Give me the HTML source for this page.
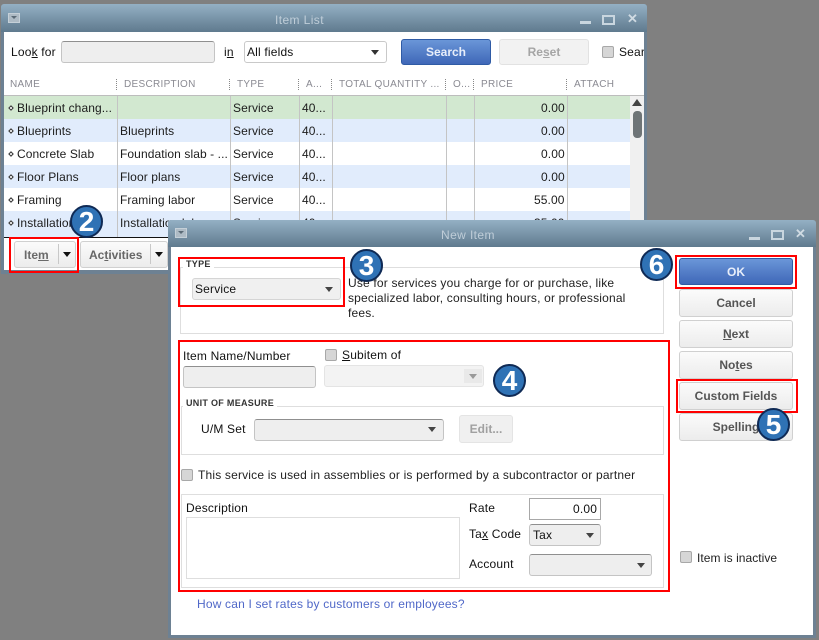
<!DOCTYPE html>
<html><head><meta charset="utf-8">
<style>
html,body{margin:0;padding:0}
body{width:819px;height:640px;overflow:hidden;background:#808080;position:relative;font:12px "Liberation Sans",sans-serif;color:#111;letter-spacing:.18px}
div,span.a{position:absolute;box-sizing:border-box}
.t{white-space:nowrap;line-height:14px}
.win{background:#6d8193;border-radius:3px 3px 0 0}
.bar{left:0;right:0;top:0;background:linear-gradient(#94b0c4,#5f7a8e);border-radius:3px 3px 0 0}
.ttl{color:#bfcdd8;font-size:12px;letter-spacing:.4px}
.sys{width:12px;height:10px;background:#aebbc5;border:1px solid #c5d0d8}
.sys:after{content:"";position:absolute;left:2px;top:2px;width:0;height:0;border-left:3px solid transparent;border-right:3px solid transparent;border-top:3px solid #5a6a76}
.min{width:11px;height:3px;background:#c9d6df}
.max{width:13px;height:10px;border:2px solid #c9d6df;border-top-width:2px}
.x{color:#d0dbe3;font:bold 13px "Liberation Sans",sans-serif;line-height:14px;letter-spacing:0}
.h{font-size:10px;color:#8a8a92;letter-spacing:.3px;line-height:12px;white-space:nowrap}
.sep{width:1px;height:11px;border-left:1px dotted #888}
.row{left:4px;width:626px;height:23px}
.vl{width:1px;background:#c4c4c4}
.cell{line-height:14px;white-space:nowrap;color:#1c1c1c;letter-spacing:.09px}
.d{width:4px;height:4px;background:#fff;border:1px solid #333;transform:rotate(45deg)}
.btn{background:linear-gradient(#fbfbfb,#ececec);border:1px solid #d0d0d0;border-radius:3px;text-align:center;font-weight:bold;color:#555;font-size:12px;letter-spacing:0}
.blue{background:linear-gradient(#6a96d8,#3f67b8);border:1px solid #2f5ba5;border-radius:3px;color:#e8eefa;text-align:center;font-weight:bold;font-size:12px;letter-spacing:0}
.cb{width:12px;height:12px;background:#d6d6d6;border:1px solid #a8a8a8;border-radius:2px}
.dd{background:#eeeeee;border:1px solid #c4c4c4;border-top-color:#8f8f8f;border-radius:3px}
.ar{width:0;height:0;border-left:4px solid transparent;border-right:4px solid transparent;border-top:5px solid #444}
.red{border:2px solid #f00}
.b{width:33px;height:33px;border-radius:50%;background:#2f72b5;border:2px solid #0f2a55;color:#fff;font:bold 28px/29px "Liberation Sans",sans-serif;text-align:center;letter-spacing:0}
.box{border:1px solid #dedede}
.lbl{background:#fff;padding:0 3px;font-size:9px;font-weight:bold;color:#333;letter-spacing:.3px;line-height:11px;white-space:nowrap}
u{text-decoration:underline}
</style></head><body>

<!-- Item List -->
<div class="win" style="left:1px;top:4px;width:646px;height:270px">
  <div class="bar" style="height:28px"></div>
  <div class="sys" style="left:7px;top:9px"></div>
  <div class="t ttl" style="left:274px;top:9px">Item List</div>
  <div class="min" style="left:579px;top:17px"></div>
  <div class="max" style="left:601px;top:11px"></div>
  <div class="x" style="left:626px;top:8px">✕</div>
  <div style="left:3px;top:28px;width:640px;height:238px;background:#fff"></div>
</div>
<div class="t" style="left:11px;top:45px">Loo<u>k</u> for</div>
<div class="dd" style="left:61px;top:41px;width:154px;height:22px"></div>
<div class="t" style="left:224px;top:45px">i<u>n</u></div>
<div style="left:244px;top:41px;width:143px;height:22px;background:#fff;border:1px solid #c9c9c9;border-radius:3px"></div>
<div class="t" style="left:247px;top:45px">All fields</div>
<div class="ar" style="left:371px;top:50px;border-top-color:#333"></div>
<div class="blue t" style="left:401px;top:39px;width:90px;height:26px;line-height:24px">Search</div>
<div class="btn t" style="left:499px;top:39px;width:90px;height:26px;line-height:24px;color:#a5a5a5;background:#f2f2f2;border-color:#e2e2e2">Re<u>s</u>et</div>
<div class="cb" style="left:602px;top:46px"></div>
<div style="left:619px;top:44px;width:25px;height:16px;overflow:hidden"><div class="t" style="left:0;top:1px">Search</div></div>

<div class="h" style="left:10px;top:79px">NAME</div>
<div class="h" style="left:124px;top:79px">DESCRIPTION</div>
<div class="h" style="left:237px;top:79px">TYPE</div>
<div class="h" style="left:306px;top:79px">A...</div>
<div class="h" style="left:339px;top:79px">TOTAL QUANTITY ...</div>
<div class="h" style="left:453px;top:79px">O...</div>
<div class="h" style="left:481px;top:79px">PRICE</div>
<div class="h" style="left:574px;top:79px">ATTACH</div>
<div class="sep" style="left:116px;top:79px"></div>
<div class="sep" style="left:229px;top:79px"></div>
<div class="sep" style="left:298px;top:79px"></div>
<div class="sep" style="left:331px;top:79px"></div>
<div class="sep" style="left:445px;top:79px"></div>
<div class="sep" style="left:473px;top:79px"></div>
<div class="sep" style="left:566px;top:79px"></div>
<div style="left:4px;top:95px;width:640px;height:1px;background:#bdbdbd"></div>

<div class="row" style="top:96px;background:#d2e8d0"></div>
<div class="row" style="top:119px;background:#e1ecfc"></div>
<div class="row" style="top:142px;background:#fff"></div>
<div class="row" style="top:165px;background:#e1ecfc"></div>
<div class="row" style="top:188px;background:#fff"></div>
<div class="row" style="top:211px;height:26px;background:#e1ecfc"></div>

<div class="vl" style="left:117px;top:96px;height:141px"></div>
<div class="vl" style="left:230px;top:96px;height:141px"></div>
<div class="vl" style="left:299px;top:96px;height:141px"></div>
<div class="vl" style="left:332px;top:96px;height:141px"></div>
<div class="vl" style="left:446px;top:96px;height:141px"></div>
<div class="vl" style="left:474px;top:96px;height:141px"></div>
<div class="vl" style="left:567px;top:96px;height:141px"></div>

<div class="d" style="left:9px;top:106px"></div><div class="cell" style="left:17px;top:101px">Blueprint chang...</div>
<div class="cell" style="left:233px;top:101px">Service</div><div class="cell" style="left:302px;top:101px">40...</div><div class="cell" style="left:541px;top:101px">0.00</div>
<div class="d" style="left:9px;top:129px"></div><div class="cell" style="left:17px;top:124px">Blueprints</div>
<div class="cell" style="left:120px;top:124px">Blueprints</div><div class="cell" style="left:233px;top:124px">Service</div><div class="cell" style="left:302px;top:124px">40...</div><div class="cell" style="left:541px;top:124px">0.00</div>
<div class="d" style="left:9px;top:152px"></div><div class="cell" style="left:17px;top:147px">Concrete Slab</div>
<div class="cell" style="left:120px;top:147px">Foundation slab - ...</div><div class="cell" style="left:233px;top:147px">Service</div><div class="cell" style="left:302px;top:147px">40...</div><div class="cell" style="left:541px;top:147px">0.00</div>
<div class="d" style="left:9px;top:175px"></div><div class="cell" style="left:17px;top:170px">Floor Plans</div>
<div class="cell" style="left:120px;top:170px">Floor plans</div><div class="cell" style="left:233px;top:170px">Service</div><div class="cell" style="left:302px;top:170px">40...</div><div class="cell" style="left:541px;top:170px">0.00</div>
<div class="d" style="left:9px;top:198px"></div><div class="cell" style="left:17px;top:193px">Framing</div>
<div class="cell" style="left:120px;top:193px">Framing labor</div><div class="cell" style="left:233px;top:193px">Service</div><div class="cell" style="left:302px;top:193px">40...</div><div class="cell" style="left:534px;top:193px">55.00</div>
<div class="d" style="left:9px;top:221px"></div><div class="cell" style="left:17px;top:216px">Installation</div>
<div class="cell" style="left:120px;top:216px">Installation labor</div><div class="cell" style="left:233px;top:216px">Service</div><div class="cell" style="left:302px;top:216px">40...</div><div class="cell" style="left:534px;top:216px">35.00</div>

<!-- scrollbar -->
<div style="left:630px;top:96px;width:14px;height:141px;background:#f0f0f0"></div>
<div class="ar" style="left:632px;top:99px;border:0;border-left:5px solid transparent;border-right:5px solid transparent;border-bottom:7px solid #444"></div>
<div style="left:633px;top:111px;width:9px;height:27px;background:#6e7476;border-radius:4px"></div>
<div style="left:4px;top:237px;width:640px;height:1px;background:#111"></div>

<div class="btn t" style="left:14px;top:241px;width:62px;height:27px;line-height:26px;text-align:left;padding-left:9px;color:#6a6a6a">Ite<u>m</u></div>
<div style="left:58px;top:244px;width:1px;height:20px;background:#c8c8c8"></div>
<div class="ar" style="left:63px;top:252px;border-top-color:#111"></div>
<div class="btn t" style="left:80px;top:241px;width:88px;height:27px;line-height:26px;text-align:left;padding-left:8px;color:#666">Ac<u>t</u>ivities</div>
<div style="left:150px;top:244px;width:1px;height:20px;background:#c8c8c8"></div>
<div class="ar" style="left:155px;top:252px;border-top-color:#111"></div>

<!-- New Item -->
<div class="win" style="left:168px;top:220px;width:648px;height:418px">
  <div class="bar" style="height:27px"></div>
  <div class="sys" style="left:7px;top:8px"></div>
  <div class="t ttl" style="left:273px;top:8px">New Item</div>
  <div class="min" style="left:581px;top:17px"></div>
  <div class="max" style="left:603px;top:10px"></div>
  <div class="x" style="left:627px;top:7px">✕</div>
  <div style="left:3px;top:27px;width:642px;height:388px;background:#fff"></div>
</div>

<div class="box" style="left:180px;top:267px;width:484px;height:67px"></div>
<div class="lbl" style="left:183px;top:259px">TYPE</div>
<div class="dd" style="left:192px;top:278px;width:149px;height:22px;border-color:#d5d5d5;background:#f0f0f0"></div>
<div class="t" style="left:195px;top:282px">Service</div>
<div class="ar" style="left:325px;top:287px"></div>
<div class="t" style="left:348px;top:276px;line-height:15px;color:#222">Use for services you charge for or purchase, like<br>specialized labor, consulting hours, or professional<br>fees.</div>

<div class="t" style="left:183px;top:349px">Item Name/Number</div>
<div class="dd" style="left:183px;top:366px;width:133px;height:22px"></div>
<div class="cb" style="left:325px;top:349px"></div>
<div class="t" style="left:342px;top:348px"><u>S</u>ubitem of</div>
<div class="dd" style="left:324px;top:365px;width:160px;height:22px;background:#f3f3f3;border-color:#e4e4e4"></div>
<div style="left:464px;top:369px;width:18px;height:14px;background:#e9e9e9"></div>
<div class="ar" style="left:469px;top:374px;border-top-color:#999"></div>

<div class="box" style="left:181px;top:406px;width:483px;height:49px"></div>
<div class="lbl" style="left:183px;top:398px">UNIT OF MEASURE</div>
<div class="t" style="left:201px;top:422px">U/M Set</div>
<div class="dd" style="left:254px;top:419px;width:190px;height:22px"></div>
<div class="ar" style="left:428px;top:427px"></div>
<div class="btn t" style="left:459px;top:415px;width:54px;height:28px;line-height:27px;color:#a0a0a0;background:#f0f0f0;border-color:#e4e4e4">Edit...</div>

<div class="cb" style="left:181px;top:469px"></div>
<div class="t" style="left:198px;top:468px;color:#222">This service is used in assemblies or is performed by a subcontractor or partner</div>

<div class="box" style="left:181px;top:494px;width:483px;height:94px"></div>
<div class="t" style="left:186px;top:501px">Description</div>
<div class="box" style="left:186px;top:517px;width:274px;height:62px"></div>
<div class="t" style="left:469px;top:501px">Rate</div>
<div style="left:529px;top:498px;width:72px;height:22px;border:1px solid #a8a8a8;background:#fff"></div>
<div class="t" style="left:573px;top:502px">0.00</div>
<div class="t" style="left:469px;top:527px">Ta<u>x</u> Code</div>
<div class="dd" style="left:529px;top:524px;width:72px;height:22px"></div>
<div class="t" style="left:533px;top:528px">Tax</div>
<div class="ar" style="left:586px;top:533px"></div>
<div class="t" style="left:469px;top:557px">Account</div>
<div class="dd" style="left:529px;top:554px;width:123px;height:22px"></div>
<div class="ar" style="left:637px;top:563px"></div>

<div class="t" style="left:197px;top:597px;color:#5068c8">How can I set rates by customers or employees?</div>

<div class="blue t" style="left:679px;top:258px;width:114px;height:27px;line-height:26px">OK</div>
<div class="btn t" style="left:679px;top:289px;width:114px;height:28px;line-height:27px">Cancel</div>
<div class="btn t" style="left:679px;top:320px;width:114px;height:28px;line-height:27px"><u>N</u>ext</div>
<div class="btn t" style="left:679px;top:351px;width:114px;height:28px;line-height:27px">No<u>t</u>es</div>
<div class="btn t" style="left:679px;top:382px;width:114px;height:28px;line-height:27px">Custom Fields</div>
<div class="btn t" style="left:679px;top:413px;width:114px;height:28px;line-height:27px">Spelling</div>

<div class="cb" style="left:680px;top:551px"></div>
<div class="t" style="left:697px;top:551px;color:#222;letter-spacing:.05px">Item is inactive</div>

<!-- red highlights -->
<div class="red" style="left:9px;top:237px;width:70px;height:36px"></div>
<div class="red" style="left:178px;top:257px;width:167px;height:50px"></div>
<div class="red" style="left:178px;top:340px;width:492px;height:252px"></div>
<div class="red" style="left:675px;top:255px;width:122px;height:34px"></div>
<div class="red" style="left:676px;top:379px;width:122px;height:34px"></div>

<!-- badges -->
<div class="b" style="left:70px;top:205px">2</div>
<div class="b" style="left:350px;top:249px">3</div>
<div class="b" style="left:493px;top:364px">4</div>
<div class="b" style="left:757px;top:408px">5</div>
<div class="b" style="left:640px;top:248px">6</div>

</body></html>
